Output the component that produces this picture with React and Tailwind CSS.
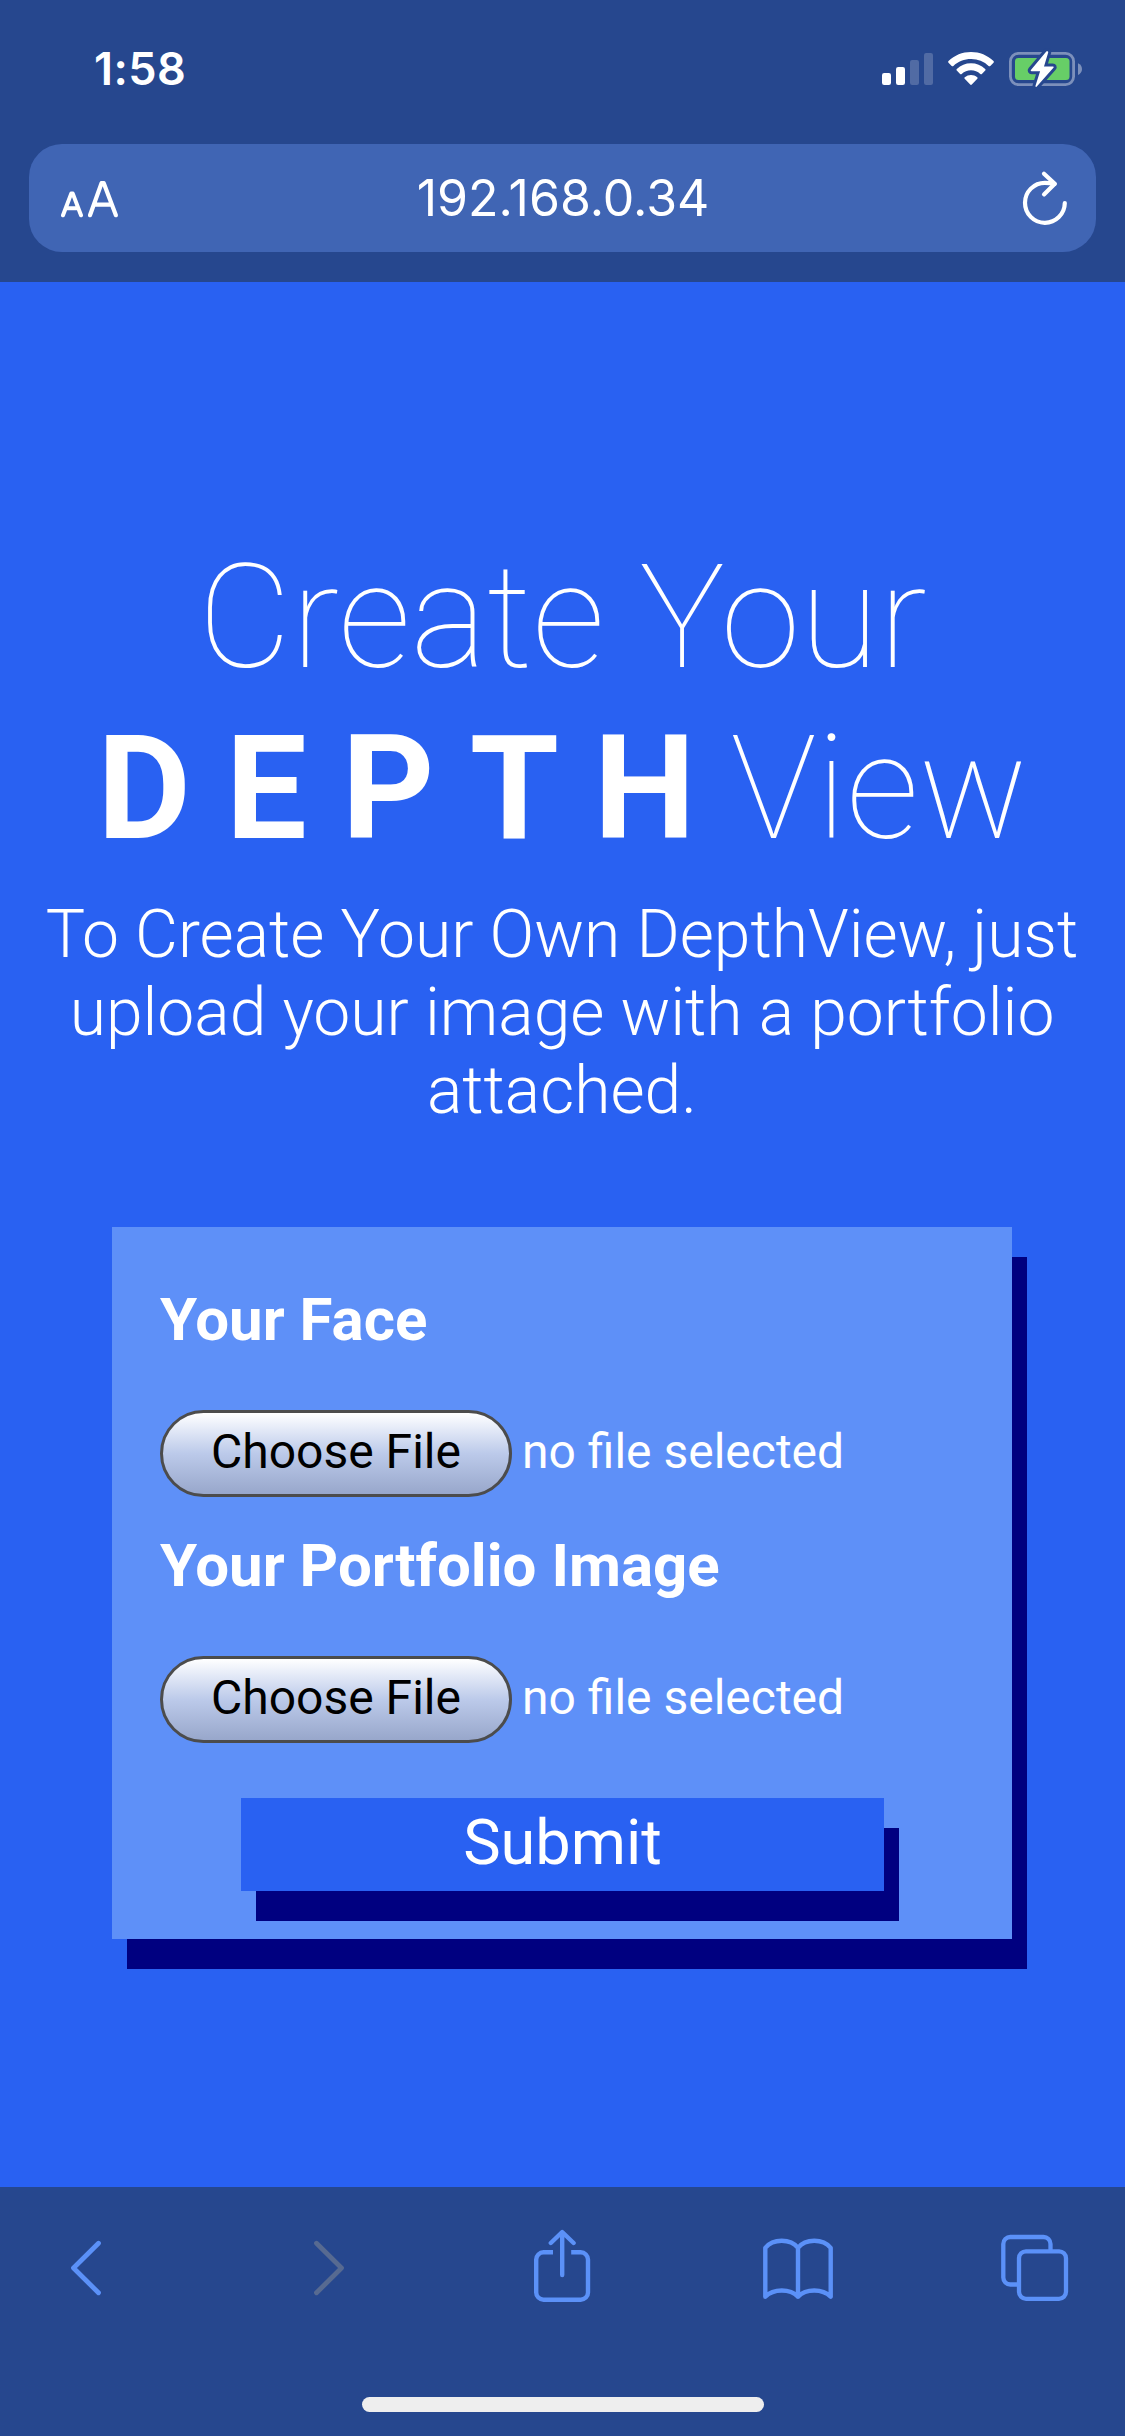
const STROKE = '#5b91f8';

function StatusIcons() {
  return (
    <svg width="206" height="44" viewBox="878 47 206 44" fill="none" aria-hidden="true">
      <g fill="#fff">
        <rect x="882" y="73" width="9" height="12" rx="2.2" />
        <rect x="896" y="67" width="9" height="18" rx="2.2" />
        <rect x="910" y="60" width="9" height="25" rx="2.2" fillOpacity="0.2" />
        <rect x="924" y="53" width="9" height="32" rx="2.2" fillOpacity="0.2" />
      </g>
      <g fill="#fff">
        <path d="M971 52c8.600 0 16.600 3.300 22.500 9 .5.500.5 1.200 0 1.700l-3.200 3.200c-.5.500-1.200.500-1.700 0A25.300 25.300 0 0 0 971 59c-6.600 0-12.900 2.500-17.600 6.900-.5.500-1.200.500-1.700 0l-3.200-3.200c-.5-.5-.5-1.200 0-1.700C954.400 55.300 962.400 52 971 52Z" />
        <path d="M971 63.300c5.300 0 10.300 2 14.200 5.600.5.500.5 1.200 0 1.700l-3.300 3.300c-.4.400-1.100.5-1.600 0a13.900 13.900 0 0 0-18.600 0c-.5.500-1.200.4-1.600 0l-3.300-3.300c-.5-.5-.5-1.200 0-1.700a20.900 20.900 0 0 1 14.200-5.600Z" />
        <path d="M971 75c2.300 0 4.500.8 6.200 2.200.5.400.5 1.100.1 1.600l-5.500 5.800c-.4.500-1.200.5-1.600 0l-5.500-5.800c-.4-.5-.4-1.200.1-1.600A9.800 9.800 0 0 1 971 75Z" />
      </g>
      <rect x="1010.400" y="53.400" width="63.200" height="31.200" rx="8" stroke="#fff" strokeOpacity="0.4" strokeWidth="2.800" />
      <rect x="1015" y="58" width="54.500" height="22" rx="3.500" fill="#67ce67" />
      <path d="M1078 63.200c2.500 1 4 3.200 4 5.900s-1.500 4.900-4 5.900Z" fill="#fff" fillOpacity="0.4" />
      <path
        d="M1046.300 51.600 1030.900 70c-.5.600-.1 1.200.6 1.200h8.600l-4.600 14.600c-.3 1 .6 1.500 1.300.7l16.600-18.700c.6-.7.200-1.400-.6-1.400h-8.800l4.200-14c.2-1-.9-1.700-1.900-.8Z"
        fill="#fff"
        stroke="#26478e"
        strokeWidth="6"
        strokeLinejoin="round"
        paintOrder="stroke"
      />
    </svg>
  );
}

function ReaderIcon() {
  return (
    <svg width="58" height="40" viewBox="61 178 58 40" fill="none" stroke="#fff" strokeLinecap="round" strokeLinejoin="round" aria-hidden="true">
      <path d="M63 215.300 71.200 193.600h1.600L81 215.300M66.200 208.200h11.600" strokeWidth="4" />
      <path d="M90 215.200 101.500 183.200h2.300L115.900 215.200M94.500 204.700h16.500" strokeWidth="4.200" />
    </svg>
  );
}

function ReloadIcon() {
  return (
    <svg width="46" height="56" viewBox="1022 170 46 56" fill="none" stroke="#fff" strokeWidth="4.200" strokeLinecap="round" strokeLinejoin="round" aria-hidden="true">
      <path d="M1064.800 203a19.900 20 0 1 1-19.900-20.200c3 0 6 .4 9.600 1.200" />
      <path d="m1044 173.800 10.800 10-10.800 10.600" />
    </svg>
  );
}

function Chevron({ forward, className }) {
  return (
    <svg className={className} width="32" height="56" viewBox="0 0 32 56" fill="none" stroke={forward ? '#576a91' : STROKE} strokeWidth="4.800" strokeLinecap="round" strokeLinejoin="round" aria-hidden="true">
      <path d={forward ? 'M3.500 3.200 28.500 28 3.500 52.800' : 'M28.500 3.200 3.500 28 28.500 52.800'} />
    </svg>
  );
}

function ShareIcon({ className }) {
  return (
    <svg className={className} width="58" height="74" viewBox="533 2229 58 74" fill="none" stroke={STROKE} strokeWidth="4.400" aria-hidden="true">
      <path d="M553 2252.300h-9.500a7.300 7.300 0 0 0-7.300 7.300v32.800a7.300 7.300 0 0 0 7.300 7.300h37.200a7.300 7.300 0 0 0 7.300-7.300v-32.800a7.300 7.300 0 0 0-7.300-7.300h-9.500" />
      <path d="M562.200 2275v-42M550.800 2243l11.400-11 11.400 11" strokeLinecap="round" strokeLinejoin="round" />
    </svg>
  );
}

function BookIcon({ className }) {
  return (
    <svg className={className} width="72" height="64" viewBox="762 2237 72 64" fill="none" stroke={STROKE} strokeWidth="4.400" strokeLinecap="round" strokeLinejoin="round" aria-hidden="true">
      <path d="M798 2247.800c-7.500-9.500-25-9.500-32.700 0v48.900c8.200-8.200 24.700-8.200 32.700 0 8-8.200 24.500-8.200 32.700 0v-48.900c-7.700-9.500-25.200-9.500-32.700 0v48.900" />
    </svg>
  );
}

function TabsIcon({ className }) {
  return (
    <svg className={className} width="70" height="68" viewBox="1000 2234 70 68" fill="none" stroke={STROKE} strokeWidth="4.300" aria-hidden="true">
      <rect x="1019" y="2251.300" width="47" height="47.500" rx="7" />
      <path d="M1050.500 2251v-7a7 7 0 0 0-7-7h-33.200a7 7 0 0 0-7 7v33.500a7 7 0 0 0 7 7h8.500" />
    </svg>
  );
}

function FileField({ label, className }) {
  return (
    <div className={className}>
      <h2 className="text-[60px] leading-[70px] font-bold">{label}</h2>
      <div className="mt-[55px] flex h-[87px] items-center">
        <button className="h-[87px] w-[352px] shrink-0 rounded-full border-[3px] border-[#4c4c4c] bg-linear-to-b from-white via-[#bccaea] to-[#98a7cb] pb-[3px] text-[48px] leading-[76px] text-black">
          Choose File
        </button>
        <span className="-mt-[5px] ml-[10px] text-[48px] leading-[83px]">no file selected</span>
      </div>
    </div>
  );
}

export default function App() {
  return (
    <div className="flex h-[2436px] w-[1125px] flex-col overflow-hidden bg-[#2961f2] font-[Roboto,sans-serif] text-white">
      <header className="h-[282px] bg-[#26478e] font-[Inter,sans-serif]">
        <div className="flex h-[144px] items-start justify-between pt-[47px] pr-[41px] pl-[94px]">
          <span className="text-[45px] leading-[44px] font-semibold tracking-[0.4px]">1:58</span>
          <StatusIcons />
        </div>
        <div className="mx-[29px] flex h-[108px] items-center rounded-[33px] bg-[#4065b4] pr-[28px] pl-[32px]">
          <ReaderIcon />
          <span className="mr-[15px] flex-1 text-center text-[50px] leading-[60px]">192.168.0.34</span>
          <ReloadIcon />
        </div>
      </header>

      <main className="flex-1 pt-[250px] text-center">
        <h1 className="text-[144px] leading-[171px] font-thin whitespace-nowrap">
          Create Your
          <br />
          <b className="font-bold tracking-[35px]">DEPTH</b>View
        </h1>
        <p className="mr-[25px] ml-6 mt-[22px] text-[66px] leading-[78px] font-light">
          To Create Your Own DepthView, just
          <br />
          upload your image with a portfolio
          <br />
          attached.
        </p>

        <form className="mt-[97px] ml-[112px] h-[712px] w-[900px] bg-[#5e90f8] px-12 pt-[58px] text-left shadow-[15px_30px_0_#000080]">
          <FileField label="Your Face" />
          <FileField label="Your Portfolio Image" className="mt-[34px]" />
          <button className="mt-[55px] ml-[81px] block h-[93px] w-[643px] bg-[#2961f2] pb-1 text-[63px] leading-[70px] shadow-[15px_30px_0_#000080]">
            Submit
          </button>
        </form>
      </main>

      <footer className="flex h-[249px] flex-col items-center bg-[#26478e]">
        <nav className="flex h-[162px] w-full items-center pl-[70px]">
          <Chevron />
          <Chevron forward className="ml-[211px]" />
          <ShareIcon className="-mt-1 ml-[188px]" />
          <BookIcon className="mt-[2px] ml-[171px]" />
          <TabsIcon className="ml-[166px]" />
        </nav>
        <div className="mt-12 h-[15px] w-[402px] rounded-full bg-[#eeeeee]" />
      </footer>
    </div>
  );
}
